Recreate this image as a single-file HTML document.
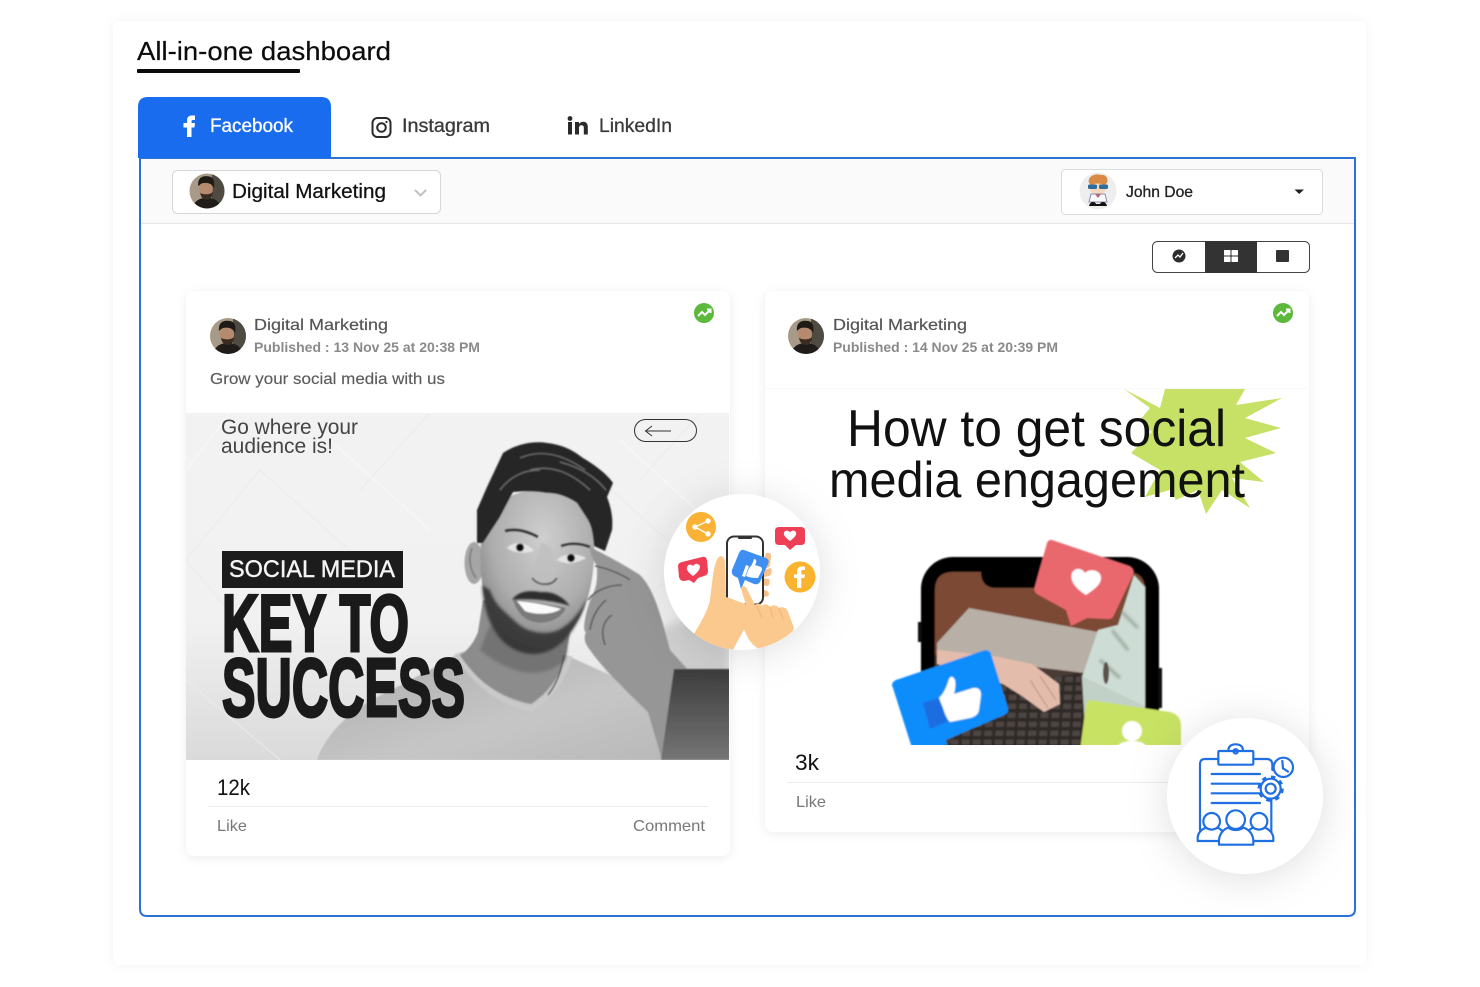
<!DOCTYPE html>
<html lang="en"><head><meta charset="utf-8"><title>All-in-one dashboard</title>
<style>
html,body{margin:0;padding:0;background:#fff;width:1480px;height:987px;overflow:hidden}
svg{display:block;font-family:"Liberation Sans",sans-serif}
</style></head><body>
<svg width="1480" height="987" viewBox="0 0 1480 987" xmlns="http://www.w3.org/2000/svg">
<defs>
<filter id="outer" x="-5%" y="-5%" width="110%" height="110%"><feDropShadow dx="0" dy="0" stdDeviation="5" flood-color="#000" flood-opacity=".05"/></filter>
<filter id="card" x="-5%" y="-5%" width="110%" height="110%"><feDropShadow dx="0" dy="2" stdDeviation="5" flood-color="#000" flood-opacity=".07"/></filter>
<filter id="circ" x="-50%" y="-50%" width="200%" height="200%"><feDropShadow dx="0" dy="4" stdDeviation="20" flood-color="#000" flood-opacity=".13"/></filter>
<filter id="soft" x="-5%" y="-5%" width="110%" height="110%"><feGaussianBlur stdDeviation=".7"/></filter>
<filter id="soft1" x="-10%" y="-10%" width="120%" height="120%"><feGaussianBlur stdDeviation="1.300"/></filter>
<filter id="soft2" x="-30%" y="-30%" width="160%" height="160%"><feGaussianBlur stdDeviation="5"/></filter>
<linearGradient id="bg1" x1="0" y1="0" x2="0" y2="1"><stop offset="0" stop-color="#f2f2f2"/><stop offset=".6" stop-color="#f1f1f1"/><stop offset="1" stop-color="#dadada"/></linearGradient>
<linearGradient id="shirt" x1="0" y1="0" x2="1" y2="1"><stop offset="0" stop-color="#ababab"/><stop offset=".6" stop-color="#c6c6c6"/><stop offset="1" stop-color="#b8b8b8"/></linearGradient>
<radialGradient id="skin" cx=".55" cy=".3" r=".75"><stop offset="0" stop-color="#cfcfcf"/><stop offset=".6" stop-color="#adadad"/><stop offset="1" stop-color="#767676"/></radialGradient>
<linearGradient id="lap" x1="0" y1="0" x2="0" y2="1"><stop offset="0" stop-color="#3c3c3c"/><stop offset="1" stop-color="#757575"/></linearGradient>
<clipPath id="img1"><rect x="186" y="413" width="543" height="347"/></clipPath>
<clipPath id="img2"><rect x="765" y="389" width="544" height="356"/></clipPath>
<clipPath id="c1"><circle cx="742" cy="572" r="78"/></clipPath>
<clipPath id="av"><circle cx="0" cy="0" r="18"/></clipPath>
<symbol id="avatar" viewBox="-18 -18 36 36" overflow="visible">
<g clip-path="url(#av)">
<rect x="-18" y="-18" width="36" height="36" fill="#a89a88"/>
<rect x="5" y="-18" width="13" height="36" fill="#4f4a42"/>
<path d="M-15 18 C-13 9 -6 7 0 7 C7 7 13 10 14 18Z" fill="#1f1c19"/>
<ellipse cx="-1" cy="-2" rx="7" ry="9" fill="#b58a6e"/>
<path d="M-9 -5 C-10 -15 -3 -16 2 -15 C8 -14 8 -7 7 -3 C5 -8 0 -9 -5 -8 C-7 -7 -8 -6 -9 -5Z" fill="#1f1a16"/>
<path d="M-7 2 C-6 8 -2 9 0 9 C4 9 6 5 6 1 C3 4 -3 4 -7 2Z" fill="#3a2c22"/>
</g></symbol>
<symbol id="green" viewBox="-10 -10 20 20" overflow="visible">
<circle r="10" fill="#5cb93c"/><path d="M-6 3 L-2 -1 L1 2 L6 -3 M3 -3.500 H6.500 V0" fill="none" stroke="#fff" stroke-width="2"/>
</symbol>
<pattern id="keys" width="11" height="9" patternUnits="userSpaceOnUse" patternTransform="skewX(-4)"><rect width="11" height="9" fill="#2f2928"/><rect x="1.500" y="1.500" width="8" height="5.500" rx="1" fill="#4d4543"/></pattern>
</defs>

<rect x="113" y="21" width="1253" height="944" rx="6" fill="#fff" filter="url(#outer)"/>

<text x="137" y="60" font-size="26" fill="#0c0c0c" stroke="#0c0c0c" stroke-width=".2" textLength="254" lengthAdjust="spacingAndGlyphs">All-in-one dashboard</text>
<rect x="137" y="69" width="163" height="4" rx="1" fill="#0a0a0a"/>

<!-- frame -->
<path d="M140 158 H1355 V909 Q1355 916 1348 916 H147 Q140 916 140 909 Z" fill="#fff" stroke="#2b72d4" stroke-width="2"/>
<rect x="141" y="159" width="1213" height="64" fill="#fafafa"/>
<rect x="141" y="223" width="1213" height="1" fill="#e6e6e6"/>

<!-- tabs -->
<path d="M138 158 V107 Q138 97 148 97 H321 Q331 97 331 107 V158 Z" fill="#1a6cee"/>
<path d="M187 137 V127.500 H183.500 V123 H187 V120.500 C187 117 189 115.500 192 115.500 H195 V120 H193 C191.800 120 191.500 120.600 191.500 121.600 V123 H195 L194.400 127.500 H191.500 V137 Z" fill="#fff"/>
<text x="210" y="132" font-size="19" fill="#fff" stroke="#fff" stroke-width=".3" textLength="83" lengthAdjust="spacingAndGlyphs">Facebook</text>
<rect x="372.500" y="118" width="18" height="19" rx="5" fill="none" stroke="#2a2a2a" stroke-width="2"/>
<circle cx="381.500" cy="127.500" r="4.300" fill="none" stroke="#2a2a2a" stroke-width="2"/><circle cx="386.500" cy="122" r="1.100" fill="#2a2a2a"/>
<text x="402" y="132" font-size="19" fill="#3a3a3a" stroke="#3a3a3a" stroke-width=".3" textLength="88" lengthAdjust="spacingAndGlyphs">Instagram</text>
<rect x="568" y="122" width="4" height="12.500" fill="#2a2a2a"/><circle cx="570" cy="118.500" r="2.400" fill="#2a2a2a"/>
<path d="M575 134.500 V122 H579 V124 C580 122.500 581.500 121.700 583.200 121.700 C586.500 121.700 587.800 124 587.800 127 V134.500 H583.800 V127.800 C583.800 126.200 583 125.300 581.500 125.300 C580 125.300 579 126.300 579 128 V134.500 Z" fill="#2a2a2a"/>
<text x="599" y="132" font-size="19" fill="#3a3a3a" stroke="#3a3a3a" stroke-width=".3" textLength="73" lengthAdjust="spacingAndGlyphs">LinkedIn</text>

<!-- selects -->
<rect x="172.500" y="170.500" width="268" height="43" rx="5" fill="#fff" stroke="#d6d6d6"/>
<use href="#avatar" x="189.500" y="173.500" width="35" height="35"/>
<text x="232" y="198" font-size="20" fill="#111" stroke="#111" stroke-width=".25" textLength="154" lengthAdjust="spacingAndGlyphs">Digital Marketing</text>
<path d="M415 190 L420.500 195.500 L426 190" fill="none" stroke="#c0c0c0" stroke-width="2"/>

<rect x="1061.500" y="169.500" width="261" height="45" rx="4" fill="#fff" stroke="#dcdcdc"/>
<circle cx="1098" cy="191" r="18.500" fill="#eeeeee"/>
<path d="M1089 183 C1087 176 1096 173 1101 175 C1105 174 1109 178 1107 183 L1103 186 H1092 Z" fill="#d98a45"/>
<ellipse cx="1098" cy="189" rx="8" ry="5.500" fill="#f3d9bd"/>
<rect x="1088" y="184.500" width="9" height="4.500" rx="1.500" fill="#2f6d9e"/><rect x="1099" y="184.500" width="9" height="4.500" rx="1.500" fill="#2f6d9e"/>
<path d="M1091 194 H1105 L1107 202 H1089 Z" fill="#fafafa" stroke="#8b8fb0" stroke-width="1"/>
<path d="M1095 194 L1098 198 L1101 194" fill="#b9637a"/>
<path d="M1089 206 C1090 201 1095 201 1096 204 H1100 C1101 201 1106 201 1107 206 Z" fill="#111"/>
<text x="1126" y="197" font-size="16" fill="#222" stroke="#222" stroke-width=".3" textLength="67" lengthAdjust="spacingAndGlyphs">John Doe</text>
<path d="M1294.500 189.500 H1304 L1299.200 194 Z" fill="#222"/>

<!-- toggle -->
<rect x="1152.500" y="241.500" width="157" height="31" rx="5" fill="#fff" stroke="#444"/>
<rect x="1205" y="241" width="52" height="32" fill="#333"/>
<circle cx="1179" cy="256" r="6.500" fill="#2c2c2c"/><path d="M1175 258 L1178 255 L1180 257 L1183 253" fill="none" stroke="#fff" stroke-width="1.300"/>
<rect x="1224" y="250" width="6.500" height="5.500" rx=".5" fill="#fff"/><rect x="1231.500" y="250" width="6.500" height="5.500" rx=".5" fill="#fff"/><rect x="1224" y="256.500" width="6.500" height="5.500" rx=".5" fill="#fff"/><rect x="1231.500" y="256.500" width="6.500" height="5.500" rx=".5" fill="#fff"/>
<rect x="1276" y="250" width="13" height="12" rx="1" fill="#333"/>

<!-- card 1 -->
<rect x="186" y="291" width="544" height="565" rx="8" fill="#fff" filter="url(#card)"/>
<use href="#avatar" x="210" y="318" width="36" height="36"/>
<text x="254" y="330" font-size="16" fill="#555" stroke="#555" stroke-width=".2" textLength="134" lengthAdjust="spacingAndGlyphs">Digital Marketing</text>
<text x="254" y="352" font-size="14" fill="#8a8a8a" font-weight="700" textLength="226" lengthAdjust="spacingAndGlyphs">Published : 13 Nov 25 at 20:38 PM</text>
<text x="210" y="384" font-size="16" fill="#5c5c5c" stroke="#5c5c5c" stroke-width=".15" textLength="235" lengthAdjust="spacingAndGlyphs">Grow your social media with us</text>
<use href="#green" x="694" y="303" width="20" height="20"/>

<g clip-path="url(#img1)">
<rect x="186" y="413" width="544" height="347" fill="url(#bg1)"/>
<path d="M186 560 L260 470 L360 560 L270 660 Z M600 480 L690 560 L600 640 M430 413 L360 490 M700 413 L640 480 M186 680 L280 760" fill="none" stroke="#ebebeb" stroke-width="1"/>
<path d="M230 413 L186 470 M330 440 L430 530 M620 440 L729 540" fill="none" stroke="#f7f7f7" stroke-width="1.500"/>
<path d="M610 650 L729 600 V760 H600 Z" fill="#bdbdbd" filter="url(#soft2)" opacity=".6"/>
<g filter="url(#soft)">
<path d="M317 760 C325 735 350 708 395 688 C420 675 445 662 462 652 L565 655 C590 665 640 690 665 700 L672 760 Z" fill="url(#shirt)"/>
<path d="M483 600 L478 632 Q472 648 459 656 Q488 696 531 704 Q556 688 566 656 L572 620 Z" fill="#8c8c8c"/>
<path d="M490 625 Q525 665 570 625 L566 660 Q530 690 480 650 Z" fill="#5f5f5f" opacity=".55" filter="url(#soft1)"/>
<path d="M456 654 Q486 700 531 709 Q560 692 570 656" fill="none" stroke="#c9c9c9" stroke-width="5"/>
<path d="M564 655 Q560 680 548 695" fill="none" stroke="#444" stroke-width="1.300"/>
<ellipse cx="474" cy="563" rx="9.500" ry="21" fill="#a6a6a6"/><path d="M472 548 C468 558 470 570 476 578" fill="none" stroke="#777" stroke-width="1.500"/>
<path d="M481 540 C478 590 488 630 515 645 C535 658 560 650 575 625 C590 605 596 570 594 530 C590 505 570 490 540 490 C510 490 486 505 481 540 Z" fill="url(#skin)"/>
<path d="M482 585 C484 622 500 652 532 654 C558 655 578 630 587 598 C580 612 572 622 562 628 C550 636 528 634 516 622 C503 610 495 605 490 590 Z" fill="#2a2a2a" opacity=".82" filter="url(#soft1)"/>
<path d="M512 600 C518 590 532 590 541 592 C552 591 563 596 570 606 C555 601 530 598 512 600Z" fill="#2e2e2e" filter="url(#soft)"/>
<path d="M513 600 C530 601 550 604 566 608 C560 622 540 626 528 620 C519 615 515 607 513 600Z" fill="#7a7a7a"/>
<path d="M517 601 C530 602 548 605 561 609 C552 615 535 615 525 611 Z" fill="#fbfbfb"/>
<path d="M507 548 C513 541 526 541 534 551 C523 554 514 553 507 548Z" fill="#e4e4e4"/><circle cx="520" cy="547.500" r="4" fill="#111"/>
<path d="M557 560 C562 554 576 552 586 558 C576 564 565 565 557 560Z" fill="#e4e4e4"/><circle cx="571" cy="558" r="4" fill="#111"/>
<path d="M505 531 Q520 527 538 537" fill="none" stroke="#333" stroke-width="3"/><path d="M561 546 Q575 541 590 547" fill="none" stroke="#333" stroke-width="2.800"/>
<path d="M541 542 C537 560 532 572 532 578 C536 587 552 588 557 578 C555 568 552 556 551 547 Z" fill="#bfbfbf" opacity=".8"/>
<path d="M532 578 Q538 585 545 584 Q552 585 557 578" fill="none" stroke="#5e5e5e" stroke-width="2"/>
<path d="M477 543 L477 510 L487 487 L503 453 C518 443 535 441 547 443 C565 445 575 452 583 458 C595 465 608 475 613 483 L607 497 C612 510 613 520 612 530 L605 551 L594 546 C593 535 592 527 588 520 L577 503 C565 495 555 493 547 493 C535 491 525 491 513 492 L500 517 L483 543 Z" fill="#282828"/>
<path d="M520 458 Q550 445 585 470 M560 462 Q590 470 606 490 M530 470 Q560 462 590 490 M500 490 Q515 470 540 470" fill="none" stroke="#6e6e6e" stroke-width="1.200"/>
<path d="M590 547 C600 552 625 565 640 575 C655 590 662 620 670 650 L690 672 C680 680 676 690 674 700 L662 760 L648 712 C625 690 600 665 590 650 C582 640 585 635 586 632 C582 632 585 612 592 596 C598 585 597 575 597 566 C593 560 590 553 590 547Z" fill="#969696"/>
<path d="M595 566 C605 568 618 572 630 580 M588 600 C595 590 610 585 622 585 M590 630 C592 615 600 605 606 600 M605 645 C600 630 604 620 612 615" fill="none" stroke="#4a4a4a" stroke-width="1.300"/>
<path d="M674 669 H730 V760 H661 Z" fill="url(#lap)"/>
</g>
</g>
<text x="221" y="434" font-size="21" fill="#444" textLength="137" lengthAdjust="spacingAndGlyphs">Go where your</text>
<text x="221" y="453" font-size="21" fill="#444" textLength="112" lengthAdjust="spacingAndGlyphs">audience is!</text>
<rect x="634.500" y="419.500" width="62" height="22" rx="11" fill="none" stroke="#333"/>
<path d="M671 431 H646 M652 426 L645.500 431 L652 436" fill="none" stroke="#333"/>
<rect x="222" y="551" width="181" height="37" fill="#1c1c1c"/>
<text x="229" y="577" font-size="24" fill="#f4f4f4" stroke="#f4f4f4" stroke-width=".4" textLength="166" lengthAdjust="spacingAndGlyphs">SOCIAL MEDIA</text>
<text x="222" y="651" font-size="81" font-weight="700" fill="#1a1a1a" stroke="#1a1a1a" stroke-width="3" textLength="187" lengthAdjust="spacingAndGlyphs">KEY TO</text>
<text x="222" y="716" font-size="83" font-weight="700" fill="#1a1a1a" stroke="#1a1a1a" stroke-width="3" textLength="243" lengthAdjust="spacingAndGlyphs">SUCCESS</text>

<text x="217" y="795" font-size="22" fill="#111" textLength="33" lengthAdjust="spacingAndGlyphs">12k</text>
<rect x="208" y="806" width="500" height="1" fill="#ececec"/>
<text x="217" y="831" font-size="16" fill="#777" textLength="30" lengthAdjust="spacingAndGlyphs">Like</text>
<text x="633" y="831" font-size="16" fill="#777" textLength="72" lengthAdjust="spacingAndGlyphs">Comment</text>

<!-- card 2 -->
<rect x="765" y="291" width="544" height="541" rx="8" fill="#fff" filter="url(#card)"/>
<use href="#avatar" x="788" y="318" width="36" height="36"/>
<text x="833" y="330" font-size="16" fill="#555" stroke="#555" stroke-width=".2" textLength="134" lengthAdjust="spacingAndGlyphs">Digital Marketing</text>
<text x="833" y="352" font-size="14" fill="#8a8a8a" font-weight="700" textLength="225" lengthAdjust="spacingAndGlyphs">Published : 14 Nov 25 at 20:39 PM</text>
<use href="#green" x="1273" y="303" width="20" height="20"/>
<rect x="765" y="388" width="544" height="1" fill="#f8f8f8"/>

<g clip-path="url(#img2)">
<polygon points="1124,389 1160,408 1165,389 1245,389 1236,405 1282,398 1245,418 1281,428 1245,438 1276,453 1240,462 1264,482 1232,478 1250,508 1222,490 1206,514 1198,490 1176,500 1170,490 1145,497 1160,470 1131,453 1152,432 1140,420 1150,408" fill="#c6e165"/>
<g filter="url(#soft)">
<rect x="921" y="557" width="238" height="240" rx="32" fill="#000"/>
<rect x="918" y="622" width="4" height="20" fill="#111"/>
<rect x="1158" y="668" width="4" height="40" fill="#111"/>
<path d="M935 590 Q935 572 953 572 H981 C981 582 986 588 996 588 H1085 C1095 588 1100 582 1100 572 H1127 Q1145 572 1145 590 V745 H935 Z" fill="#7c4a34"/>
<path d="M937 643 L969 608 L1098 632 L1084 673 L937 655 Z" fill="#b8afa6"/>
<path d="M935 655 L1084 673 L1086 745 H935 Z" fill="#4a3a34"/>
<path d="M994 687 L1080 673 L1086 745 L948 745 Z" fill="url(#keys)"/>
<path d="M1134 575 L1145 587 V707 L1082 677 L1098 630 L1118 625 Z" fill="#cddcd4"/>
<path d="M1145 707 L1082 677 L1086 745 H1145 Z" fill="#c2d1c8"/>
<g filter="url(#soft1)"><path d="M1112 630 L1128 650 M1122 612 L1138 628 M1100 660 L1120 678" stroke="#9aa79d" stroke-width="3" fill="none"/></g>
<ellipse cx="1106" cy="673" rx="3" ry="11" fill="#5a5148"/>
<path d="M937 650 L994 656 L1032 664 L1059 684 L1060 704 L1044 712 L1022 696 L1003 684 L937 664 Z" fill="#e4bcac"/>
<path d="M1030 680 L1048 708 M1040 676 L1056 700" stroke="#b98f80" stroke-width="1" fill="none"/>
<path d="M1052 540 L1129 566 Q1135 569 1133 575 L1114 615 Q1112 620 1106 619 L1087 618 L1071 626 L1066 610 L1037 594 Q1033 591 1035 586 L1047 543 Q1049 539 1052 540Z" fill="#e9686e"/>
<path d="M1086 595 C1078 590 1069 582 1072 573 C1075 567 1082 568 1085 573 C1090 568 1101 570 1101 578 C1101 585 1093 590 1086 595Z" fill="#fff"/>
<path d="M985 650 Q990 650 991 654 L1008 708 Q1009 713 1004 715 L946 740 L948 748 H912 L893 688 Q890 683 896 680 Z" fill="#0d8dfb"/>
<path d="M923 703 L939 698 L947 722 L930 729 Z" fill="#1a6de0"/>
<path d="M939 698 C945 692 947 685 949 679 Q952 674 955 680 C956 685 955 690 954 694 L973 688 Q981 687 981 695 L979 710 Q978 716 970 718 L950 722 Q946 718 943 708 Z" fill="#fff"/>
<path d="M1090 700 L1170 712 Q1181 715 1181 726 V750 H1080 L1086 705 Q1087 700 1090 700Z" fill="#c8e264"/>
<circle cx="1132" cy="731" r="10" fill="#fff"/><ellipse cx="1132" cy="748" rx="15" ry="7" fill="#fff"/>
</g>
</g>
<text x="847" y="446" font-size="52" fill="#111" textLength="379" lengthAdjust="spacingAndGlyphs">How to get social</text>
<text x="829" y="497" font-size="50" fill="#111" textLength="416" lengthAdjust="spacingAndGlyphs">media engagement</text>

<text x="795" y="770" font-size="22" fill="#111" textLength="24" lengthAdjust="spacingAndGlyphs">3k</text>
<rect x="787" y="782" width="400" height="1" fill="#ececec"/>
<text x="796" y="807" font-size="16" fill="#777" textLength="30" lengthAdjust="spacingAndGlyphs">Like</text>

<!-- circle 1 -->
<circle cx="742" cy="572" r="78" fill="#fff" filter="url(#circ)"/>
<g clip-path="url(#c1)">
<circle cx="701" cy="527" r="15" fill="#f9b233"/>
<g fill="#fff" stroke="#fff"><circle cx="708" cy="521" r="2.200"/><circle cx="695" cy="527" r="2.200"/><circle cx="708" cy="534" r="2.200"/><path d="M708 521 L695 527 L708 534" fill="none" stroke-width="1.300"/></g>
<circle cx="800" cy="577" r="15.500" fill="#fab32e"/>
<path d="M797 588 V578 H794 V574.500 H797 V571.500 C797 568 799 566.500 802 566.500 H805 V570 H803 C801.800 570 801.300 570.500 801.300 571.800 V574.500 H805 L804.400 578 H801.300 V588 Z" fill="#fff"/>
<path d="M779 527 H801 Q805 527 805 531 V541 Q805 545 801 545 H796 L790 550 L785 545 H779 Q775 545 775 541 V531 Q775 527 779 527Z" fill="#ee3f57"/>
<path d="M790 541 C786 538 783 535 784 532.500 C785 530 788.500 530 790 532.500 C791.500 530 795 530 796 532.500 C797 535 794 538 790 541Z" fill="#fff"/>
<path d="M682 562 L702 557 Q706 556 707 560 L708 571 Q708 575 704 576 L698 578 L694 583 L689 580 L684 581 Q680 581 679 577 L678 566 Q678 563 682 562Z" fill="#ee3f57"/>
<path d="M693 576 C689 573 686 570 687 567 C688 564 691 564 693 566 C695 563 698 563 700 566 C700 570 697 573 693 576Z" fill="#fff"/>
<path d="M766 553 Q772 552 771 557 L770 566 Q766 570 762 566 Z M764 570 L771 568 Q773 574 769 576 L764 577 Z M762 578 L769 579 Q771 585 767 586 L762 585 Z M763 590 Q769 590 769 595 Q766 598 763 596 Z" fill="#f6c088"/>
<rect x="727" y="536.500" width="36" height="68" rx="7" fill="#fff" stroke="#333" stroke-width="2"/>
<rect x="738" y="537" width="14" height="2" rx="1" fill="#333"/>
<path d="M690 640 C700 625 708 610 710 600 C712 585 713 570 716 562 C719 553 725 555 725 563 L726 597 C735 600 745 604 756 608 L730 655 L700 655Z" fill="#fbc88e"/>
<path d="M744 550 L766 558 Q770 560 768 564 L760 582 Q758 585 754 584 L745 580 L741 589 L738 578 L734 576 Q731 574 732 570 L739 553 Q741 549 744 550Z" fill="#3f8ff2"/>
<path d="M742 576 L746 565 L749 566 L745 577 Z M749 568 C752 566 753 562 754 559 Q757 559 756 563 L755 565 L761 567 Q763 569 761 572 L758 578 Q750 578 746 576 Z" fill="#fff"/>
<path d="M741 589 C741 585 745 585 747 589 L755 605 C757 603 760 603 762 606 C765 603 768 604 770 607 C773 604 777 605 779 608 C783 606 787 608 788 612 L794 628 C790 638 780 645 768 650 C760 652 752 645 748 638 C744 630 742 625 743 620 C745 617 748 616 750 617 Z" fill="#fbc88e"/>
<path d="M757 606 L762 618 M770 607 L773 618 M779 608 L783 619" fill="none" stroke="#eeb478" stroke-width="1"/>
</g>

<!-- circle 2 -->
<circle cx="1245" cy="796" r="78" fill="#fff" filter="url(#circ)"/>
<g transform="translate(1165 715) scale(.3333)" fill="none" stroke="#1f6fe3" stroke-width="6.500" stroke-linejoin="round" stroke-linecap="round">
<path d="M160 132 H120 Q105 132 105 147 V345"/>
<path d="M265 132 H305 Q321 132 322 148 V165 M319 255 V378"/>
<path d="M190 108 Q190 88 212 88 Q234 88 234 108"/>
<rect x="160" y="108" width="105" height="41" rx="3" fill="#fff"/>
<circle cx="212" cy="109" r="6.500"/>
<path d="M140 177 H285 M140 206 H285 M140 235 H285 M140 264 H285"/>
<circle cx="355" cy="157" r="29" fill="#fff"/><path d="M352 138 L354 160 L369 170"/>
<circle cx="317" cy="221" r="30" fill="#fff"/>
<circle cx="317" cy="221" r="35" stroke-width="9" stroke-dasharray="13 14.490" stroke-linecap="butt"/>
<circle cx="317" cy="221" r="15"/>
<circle cx="140" cy="319" r="25" fill="#fff"/>
<path d="M98 378 V367 Q100 348 122 338 Q140 350 158 338 Q170 344 172 350 L165 378 Z" fill="#fff"/>
<circle cx="282" cy="319" r="25" fill="#fff"/>
<path d="M325 378 V367 Q322 348 300 338 Q282 350 264 338 Q252 344 250 350 L258 378 Z" fill="#fff"/>
<circle cx="212" cy="314" r="28" fill="#fff"/>
<path d="M162 389 H265 V375 Q262 348 236 338 Q212 352 189 338 Q165 348 162 375 Z" fill="#fff"/>
</g>
</svg>
</body></html>
